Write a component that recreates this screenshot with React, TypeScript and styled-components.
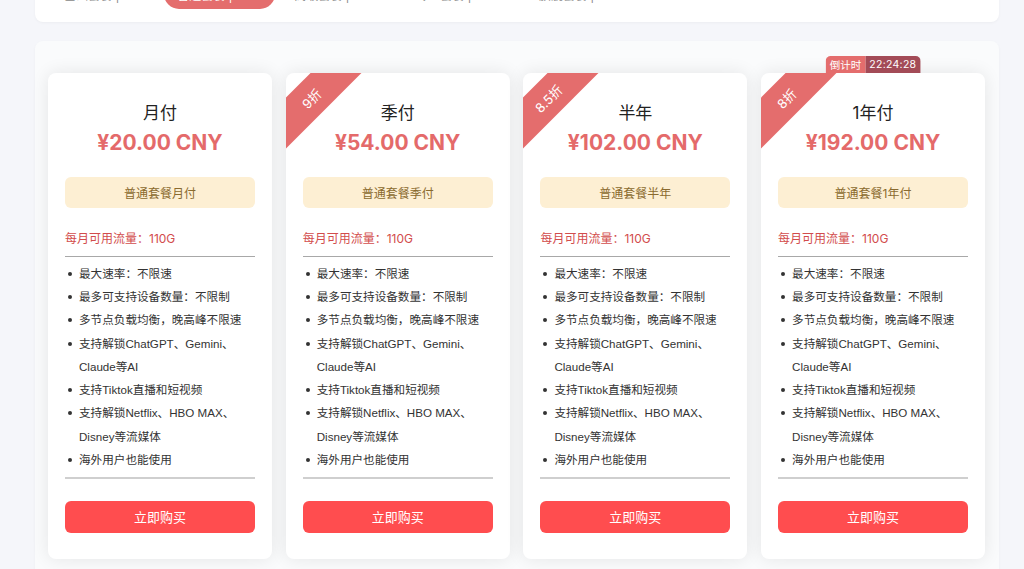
import React from "react";
import styled, { createGlobalStyle } from "styled-components";

const Global = createGlobalStyle`
  html, body { margin: 0; padding: 0; background: #f5f6fa; }
  body {
    font-family: "Inter", "Noto Sans CJK SC", sans-serif;
    color: #222;
    overflow: hidden;
  }
  * { box-sizing: border-box; }
`;

const Page = styled.div`
  width: 1024px;
  height: 569px;
  padding: 0 25px 0 35px;
  display: flex;
  flex-direction: column;
  gap: 19px;
`;

const TabCard = styled.div`
  margin-top: -34px;
  background: #fff;
  border-radius: 8px;
  box-shadow: 0 1px 3px rgba(0, 0, 0, 0.04);
  padding: 13px 13px 13px 16px;
  display: flex;
  align-items: center;
  gap: 6px;
`;

const Tab = styled.div<{ $active?: boolean }>`
  height: 30px;
  padding: 0 13px;
  border-radius: 15px;
  display: flex;
  align-items: center;
  font-family: "Inter", "Noto Sans CJK SC", sans-serif;
  font-size: 12px;
  color: ${(p) => (p.$active ? "#fff" : "#888")};
  background: ${(p) => (p.$active ? "#e46d6d" : "transparent")};
`;

const Panel = styled.div`
  flex: 1;
  background: #fafbfc;
  border-radius: 8px 8px 0 0;
  box-shadow: 0 1px 3px rgba(0, 0, 0, 0.04);
  padding: 32px 14px 0 13px;
  display: grid;
  grid-template-columns: repeat(4, 224px);
  column-gap: 13.7px;
  align-items: start;
`;

const CardWrap = styled.div`
  position: relative;
`;

const Card = styled.div`
  position: relative;
  overflow: hidden;
  background: #fff;
  border-radius: 8px;
  box-shadow: 0 0 18px rgba(0, 0, 0, 0.09);
  padding: 28px 17px 26px 17px;
  display: flex;
  flex-direction: column;
  height: 486px;
`;

const Ribbon = styled.div`
  position: absolute;
  left: -50px;
  top: 7px;
  width: 150px;
  height: 36px;
  background: #e46d6d;
  color: #fff;
  font-size: 13px;
  display: flex;
  align-items: center;
  justify-content: center;
  transform: rotate(-45deg);
`;

const Countdown = styled.div`
  position: absolute;
  top: -17px;
  left: 50%;
  transform: translateX(-50%);
  display: flex;
  height: 17px;
  border-radius: 5px 5px 0 0;
  overflow: hidden;
  font-size: 10.5px;
  color: #fff;
  z-index: 2;
`;

const CountLabel = styled.span<{ $dark?: boolean }>`
  display: flex;
  align-items: center;
  padding: 0 4px;
  background: ${(p) => (p.$dark ? "#a34b57" : "#e46d6d")};
  letter-spacing: ${(p) => (p.$dark ? "0.3px" : "0")};
`;

const Title = styled.div`
  text-align: center;
  font-size: 17px;
  line-height: 24px;
  color: #222;
`;

const Price = styled.div`
  margin-top: 4px;
  text-align: center;
  font-size: 21px;
  line-height: 28px;
  font-weight: 700;
  color: #e46a6a;
`;

const PlanTag = styled.div`
  margin-top: 20px;
  height: 32px;
  border-radius: 6px;
  background: #fdefd3;
  color: #8a6a2e;
  font-size: 12px;
  display: flex;
  align-items: center;
  justify-content: center;
`;

const Traffic = styled.div`
  margin-top: 22px;
  font-size: 12px;
  line-height: 18px;
  color: #d24c4c;
`;

const Divider = styled.div<{ $thick?: boolean }>`
  height: ${(p) => (p.$thick ? "2px" : "1px")};
  background: ${(p) => (p.$thick ? "#cfcfcf" : "#a8a8a8")};
  margin-top: ${(p) => (p.$thick ? "6px" : "8px")};
`;

const List = styled.ul`
  list-style: none;
  margin: 0;
  padding: 5px 0 0 0;
`;

const Item = styled.li`
  position: relative;
  padding-left: 14px;
  font-family: "Liberation Sans", "Noto Sans CJK SC", sans-serif;
  font-size: 11.6px;
  line-height: 23.2px;
  color: #333;
  &::before {
    content: "";
    position: absolute;
    left: 3px;
    top: 10px;
    width: 4px;
    height: 4px;
    border-radius: 50%;
    background: #333;
  }
`;

const BuyButton = styled.button`
  margin-top: 22px;
  height: 33px;
  border: none;
  border-radius: 6px;
  background: #ff4d4f;
  color: #fff;
  font-family: inherit;
  font-size: 13px;
  cursor: pointer;
`;

const features: React.ReactNode[] = [
  "最大速率：不限速",
  "最多可支持设备数量：不限制",
  "多节点负载均衡，晚高峰不限速",
  <>
    支持解锁ChatGPT、Gemini、
    <br />
    Claude等AI
  </>,
  "支持Tiktok直播和短视频",
  <>
    支持解锁Netflix、HBO MAX、
    <br />
    Disney等流媒体
  </>,
  "海外用户也能使用",
];

const plans = [
  { title: "月付", price: "¥20.00 CNY", tag: "普通套餐月付" },
  { title: "季付", price: "¥54.00 CNY", tag: "普通套餐季付", ribbon: "9折" },
  { title: "半年", price: "¥102.00 CNY", tag: "普通套餐半年", ribbon: "8.5折" },
  { title: "1年付", price: "¥192.00 CNY", tag: "普通套餐1年付", ribbon: "8折", countdown: "22:24:28" },
];

const tabs = ["基础套餐 | 990", "普通套餐 | 110G", "高级套餐 | 220G", "专业套餐 | 440G", "旗舰套餐 | 1000G"];

export default function App() {
  return (
    <>
      <Global />
      <Page>
        <TabCard>
          {tabs.map((t, i) => (
            <Tab key={t} $active={i === 1}>
              {t}
            </Tab>
          ))}
        </TabCard>
        <Panel>
          {plans.map((p) => (
            <CardWrap key={p.title}>
              {p.countdown && (
                <Countdown>
                  <CountLabel>倒计时</CountLabel>
                  <CountLabel $dark>{p.countdown}</CountLabel>
                </Countdown>
              )}
              <Card>
                {p.ribbon && <Ribbon>{p.ribbon}</Ribbon>}
                <Title>{p.title}</Title>
                <Price>{p.price}</Price>
                <PlanTag>{p.tag}</PlanTag>
                <Traffic>每月可用流量：110G</Traffic>
                <Divider />
                <List>
                  {features.map((f, i) => (
                    <Item key={i}>{f}</Item>
                  ))}
                </List>
                <Divider $thick />
                <BuyButton>立即购买</BuyButton>
              </Card>
            </CardWrap>
          ))}
        </Panel>
      </Page>
    </>
  );
}
